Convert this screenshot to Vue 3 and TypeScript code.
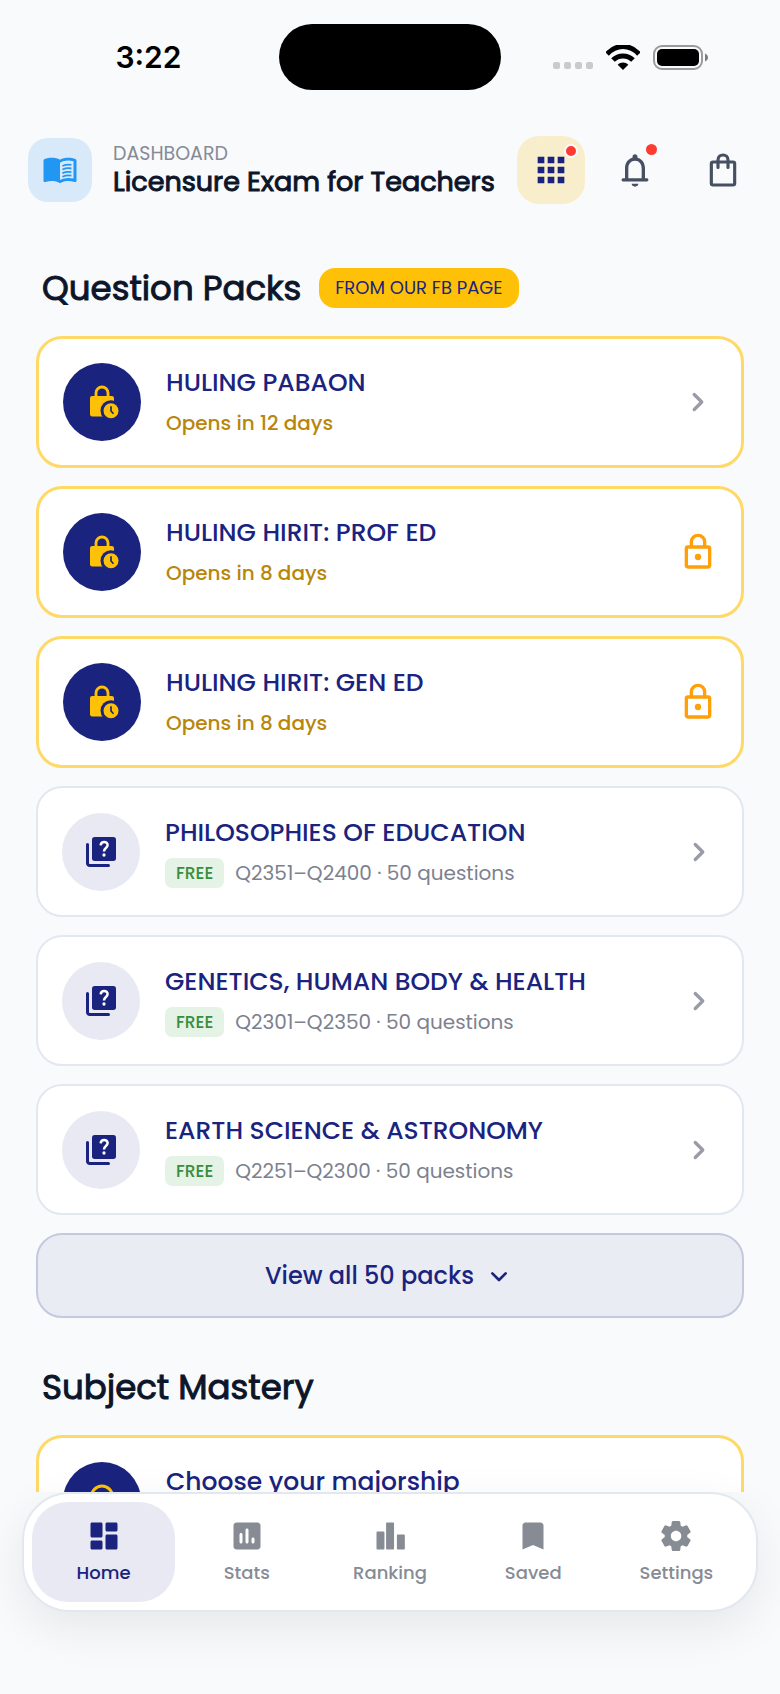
<script setup lang="ts">
interface Pack {
  title: string
  note: string
  kind: 'timed' | 'free'
  locked?: boolean
}

interface Tab {
  label: string
  icon: string
  active?: boolean
}

const packs: Pack[] = [
  { title: 'HULING PABAON', note: 'Opens in 12 days', kind: 'timed' },
  { title: 'HULING HIRIT: PROF ED', note: 'Opens in 8 days', kind: 'timed', locked: true },
  { title: 'HULING HIRIT: GEN ED', note: 'Opens in 8 days', kind: 'timed', locked: true },
  { title: 'PHILOSOPHIES OF EDUCATION', note: 'Q2351–Q2400 · 50 questions', kind: 'free' },
  { title: 'GENETICS, HUMAN BODY & HEALTH', note: 'Q2301–Q2350 · 50 questions', kind: 'free' },
  { title: 'EARTH SCIENCE & ASTRONOMY', note: 'Q2251–Q2300 · 50 questions', kind: 'free' },
]

const tabs: Tab[] = [
  {
    label: 'Home',
    active: true,
    icon: 'M4 13h6c.55 0 1-.45 1-1V4c0-.55-.45-1-1-1H4c-.55 0-1 .45-1 1v8c0 .55.45 1 1 1zm0 8h6c.55 0 1-.45 1-1v-4c0-.55-.45-1-1-1H4c-.55 0-1 .45-1 1v4c0 .55.45 1 1 1zm10 0h6c.55 0 1-.45 1-1v-8c0-.55-.45-1-1-1h-6c-.55 0-1 .45-1 1v8c0 .55.45 1 1 1zM13 4v4c0 .55.45 1 1 1h6c.55 0 1-.45 1-1V4c0-.55-.45-1-1-1h-6c-.55 0-1 .45-1 1z',
  },
  {
    label: 'Stats',
    icon: 'M19 3H5c-1.1 0-2 .9-2 2v14c0 1.1.9 2 2 2h14c1.1 0 2-.9 2-2V5c0-1.1-.9-2-2-2zM8 17c-.55 0-1-.45-1-1v-5c0-.55.45-1 1-1s1 .45 1 1v5c0 .55-.45 1-1 1zm4 0c-.55 0-1-.45-1-1V8c0-.55.45-1 1-1s1 .45 1 1v8c0 .55-.45 1-1 1zm4 0c-.55 0-1-.45-1-1v-2c0-.55.45-1 1-1s1 .45 1 1v2c0 .55-.45 1-1 1z',
  },
  {
    label: 'Ranking',
    icon: 'M3.700 9h3.900c.4 0 .7.3.7.7v10.600c0 .4-.3.7-.7.7H3.700c-.4 0-.7-.3-.7-.7V9.700c0-.4.3-.7.7-.7zM10.100 3h3.900c.4 0 .7.3.7.7v16.600c0 .4-.3.7-.7.7h-3.900c-.4 0-.7-.3-.7-.7V3.700c0-.4.3-.7.7-.7zM17.300 11h3.900c.4 0 .7.3.7.7v8.600c0 .4-.3.7-.7.7h-3.900c-.4 0-.7-.3-.7-.7v-8.600c0-.4.3-.7.7-.7z',
  },
  {
    label: 'Saved',
    icon: 'M17 3H7c-1.100 0-2 .9-2 2v16l7-3 7 3V5c0-1.100-.9-2-2-2z',
  },
  {
    label: 'Settings',
    icon: 'M19.500 12c0-.23-.01-.45-.03-.68l1.860-1.410c.4-.3.510-.860.260-1.300l-1.870-3.230c-.25-.44-.790-.620-1.250-.42l-2.150.91c-.37-.26-.76-.49-1.170-.68l-.29-2.310c-.06-.5-.49-.88-.99-.88h-3.730c-.51 0-.94.38-1 .88l-.29 2.310c-.41.190-.8.420-1.170.680l-2.150-.91c-.46-.2-1-.02-1.250.420L2.410 8.620c-.25.440-.14.990.260 1.300l1.860 1.410c-.02.220-.03.440-.03.670s.01.450.03.680l-1.860 1.410c-.4.300-.51.860-.26 1.300l1.870 3.230c.25.440.790.620 1.250.420l2.150-.91c.370.260.760.490 1.170.680l.29 2.310c.06.5.49.880.99.880h3.730c.5 0 .93-.38.990-.88l.29-2.310c.41-.19.800-.42 1.170-.68l2.150.91c.46.2 1 .02 1.250-.42l1.870-3.230c.25-.44.140-.99-.26-1.300l-1.860-1.410c.03-.23.040-.450.040-.68zm-7.460 3.500c-1.930 0-3.500-1.570-3.500-3.500s1.570-3.500 3.500-3.500 3.500 1.570 3.500 3.500-1.570 3.500-3.500 3.500z',
  },
]
</script>

<template>
  <div class="app">
    <div class="status">
      <div class="side"><time>3:22</time></div>
      <div class="island"></div>
      <div class="side indicators">
        <span class="dots"><i v-for="n in 4" :key="n"></i></span>
        <svg class="wifi" viewBox="0 0 34 25" aria-hidden="true">
          <path d="M1 9C10-1 24-1 33 9" fill="none" stroke="#000" stroke-width="5" />
          <path d="M7 15c5.500-5.500 14.500-5.500 20 0" fill="none" stroke="#000" stroke-width="5" />
          <path d="M11.700 19.800c3-3 7.600-3 10.600 0L17 25z" fill="#000" />
        </svg>
        <svg class="battery" viewBox="0 0 56 25" aria-hidden="true">
          <rect x="1" y="1" width="48" height="23" rx="8" fill="none" stroke="#9a9b9d" stroke-width="2" />
          <rect x="4" y="4" width="42" height="17" rx="5" />
          <path d="M52 8.500c4 1.500 4 6.500 0 8z" fill="#7c7d7f" />
        </svg>
      </div>
    </div>

    <header class="top">
      <div class="logo">
        <svg viewBox="0 0 24 24" class="i36" fill="#2196f3" aria-hidden="true">
          <path fill-rule="evenodd" d="M12 5.200C10.500 4.200 8.500 3.900 6.500 3.900c-1.700 0-3.300.2-4.800.8-.4.2-.7.6-.7 1v13.400c0 .7.600 1.100 1.300.9 1.300-.5 2.700-.7 4.200-.7 1.900 0 3.900.4 5.500 1.500 1.600-1.100 3.600-1.500 5.500-1.500 1.500 0 2.900.2 4.200.7.700.2 1.300-.2 1.300-.9V5.700c0-.4-.3-.8-.7-1-1.500-.6-3.100-.8-4.800-.8-2 0-4 .3-5.500 1.300zM21 17.700c-1.100-.3-2.300-.4-3.500-.4-1.700 0-4 .5-5.500 1.400V7.200c1.500-.9 3.800-1.500 5.500-1.500 1.200 0 2.400.1 3.500.5z" />
          <path d="M13.600 9.300c2-.9 4-1.100 6-.7M13.600 11.700c2-.9 4-1.100 6-.7M13.600 14.100c2-.9 4-1.100 6-.7M13.600 16.500c2-.9 4-1.100 6-.7" fill="none" stroke="#2196f3" stroke-width="1.200" />
        </svg>
      </div>
      <div class="heading">
        <p>DASHBOARD</p>
        <h1>Licensure Exam for Teachers</h1>
      </div>
      <div class="actions">
        <button type="button" class="action apps" aria-label="Apps">
          <svg viewBox="0 0 24 24" class="i40" fill="#1a237e"><path d="M4 8h4V4H4zm6 12h4v-4h-4zm-6 0h4v-4H4zm0-6h4v-4H4zm6 0h4v-4h-4zm6-10v4h4V4zm-6 4h4V4h-4zm6 6h4v-4h-4zm0 6h4v-4h-4z" /></svg>
          <span class="alert ringed"></span>
        </button>
        <button type="button" class="action" aria-label="Notifications">
          <svg viewBox="0 0 24 24" class="i40" fill="#475062"><path d="M12 22c1.100 0 2-.7 2-1.700h-4c0 1 .9 1.700 2 1.700zm7.200-5H18v-6c0-3.070-1.630-5.640-4.500-6.320V4c0-.83-.67-1.500-1.500-1.500s-1.500.670-1.500 1.500v.68C7.640 5.360 6 7.920 6 11v6H4.800c-1.100 0-1.100 1.900 0 1.900h14.400c1.100 0 1.100-1.900 0-1.900zM16 17H8v-6c0-2.480 1.510-4.500 4-4.500s4 2.020 4 4.500z" /></svg>
          <span class="alert"></span>
        </button>
        <button type="button" class="action shop" aria-label="Shop">
          <svg viewBox="0 0 24 24" class="i40" fill="none" stroke="#475062" stroke-width="1.900" stroke-linecap="round"><rect x="5" y="7.200" width="14" height="13.800" rx="1" /><path d="M9 10.500V6c0-4 6-4 6 0v4.500" /></svg>
        </button>
      </div>
    </header>

    <main>
      <section>
        <div class="title-row">
          <h2>Question Packs</h2>
          <span class="source">FROM OUR FB PAGE</span>
        </div>
        <div class="list">
          <button v-for="p in packs" :key="p.title" type="button" class="card" :class="p.kind">
            <span class="disc">
              <svg v-if="p.kind === 'timed'" viewBox="0 0 24 24" class="i36" aria-hidden="true">
                <path d="M8 9V6a4 4 0 0 1 8 0v3" fill="none" stroke="#ffc107" stroke-width="1.900" />
                <rect x="4" y="8" width="16" height="13.600" rx="1.500" fill="#ffc107" />
                <circle cx="18" cy="17.800" r="7" fill="#1a237e" />
                <circle cx="18" cy="17.800" r="5" fill="#ffc107" />
                <path d="M18 14.800v3.200l1.700 1.800" fill="none" stroke="#1a237e" stroke-width="1.100" />
              </svg>
              <svg v-else viewBox="0 0 24 24" class="i36" aria-hidden="true">
                <path d="M3 7v12.500c0 .8.700 1.500 1.500 1.500H17" fill="none" stroke="#1a237e" stroke-width="2" stroke-linecap="round" />
                <rect x="6" y="2" width="16" height="16" rx="1.800" fill="#1a237e" />
                <path d="M11.800 7.600c.1-3 4.600-3 4.600-.2 0 1.900-2.400 2-2.400 4.200" fill="none" stroke="#fff" stroke-width="1.700" />
                <circle cx="14" cy="14" r="1.100" fill="#fff" />
              </svg>
            </span>
            <span class="body">
              <span class="name">{{ p.title }}</span>
              <span class="meta"><span v-if="p.kind === 'free'" class="tag">FREE</span>{{ p.note }}</span>
            </span>
            <span class="end">
              <svg v-if="p.locked" viewBox="0 0 24 24" class="i40" aria-hidden="true">
                <path d="M8 9V6a4 4 0 0 1 8 0v3" fill="none" stroke="#ff9f0a" stroke-width="2" />
                <rect x="5" y="9" width="14" height="12" rx="1" fill="none" stroke="#ff9f0a" stroke-width="2" />
                <circle cx="12" cy="15" r="1.900" fill="#ff9f0a" />
              </svg>
              <svg v-else viewBox="0 0 24 24" class="i36" fill="none" stroke="#9a9ba8" stroke-width="2.200" stroke-linecap="round" stroke-linejoin="round" aria-hidden="true"><path d="M9.500 7l5 5-5 5" /></svg>
            </span>
          </button>
          <button type="button" class="more">
            View all 50 packs
            <svg viewBox="0 0 24 24" class="i32" fill="none" stroke="#1a237e" stroke-width="2" stroke-linecap="round" stroke-linejoin="round" aria-hidden="true"><path d="M7 10l5 5 5-5" /></svg>
          </button>
        </div>
      </section>

      <section>
        <div class="title-row"><h2>Subject Mastery</h2></div>
        <button type="button" class="card timed major">
          <span class="disc">
            <svg viewBox="0 0 24 24" class="i36" fill="none" stroke="#ffc107" stroke-width="2" aria-hidden="true"><circle cx="12" cy="9" r="7" /><path d="M8 15v7l4-2 4 2v-7" /></svg>
          </span>
          <span class="body">
            <span class="name">Choose your majorship</span>
          </span>
        </button>
      </section>
    </main>

    <nav>
      <a v-for="t in tabs" :key="t.label" href="#" :class="{ active: t.active }">
        <svg viewBox="0 0 24 24" class="i36" fill="currentColor" aria-hidden="true"><path :d="t.icon" /></svg>
        <span>{{ t.label }}</span>
      </a>
    </nav>
  </div>
</template>

<style>
body {
  background: #f9fafc;
}
</style>

<style scoped>
.app {
  display: flex;
  flex-direction: column;
  height: 100vh;
  overflow: hidden;
  background: #f9fafc;
  color: #0d1529;
  font-family: Poppins, Inter, sans-serif;
  font-weight: 500;
}
.app * {
  box-sizing: border-box;
}
h1, h2, p {
  margin: 0;
  font-weight: 400;
}
h1, h2 {
  -webkit-text-stroke: 1px currentColor;
}
button {
  margin: 0;
  padding: 0;
  border: 0;
  background: none;
  font: inherit;
  color: inherit;
  text-align: left;
}
svg {
  display: block;
  flex: none;
}
.i32 { width: 32px; height: 32px; }
.i36 { width: 36px; height: 36px; }
.i40 { width: 40px; height: 40px; }

.status {
  display: grid;
  grid-template-columns: 1fr 222px 1fr;
  align-items: center;
  padding-top: 24px;
}
.island {
  height: 66px;
  border-radius: 33px;
  background: #000;
}
.side {
  display: flex;
  justify-content: center;
  padding-left: 18px;
  color: #000;
  font: 600 30px/36px Inter, sans-serif;
}
.indicators {
  align-items: center;
  justify-content: flex-end;
  gap: 13px;
  padding-right: 71px;
}
.dots {
  display: flex;
  gap: 4px;
  padding-top: 16px;
}
.dots i {
  width: 7px;
  height: 7px;
  border-radius: 2px;
  background: #c9cacc;
}
.wifi { width: 34px; height: 25px; }
.battery { width: 56px; height: 25px; }

.top {
  display: flex;
  align-items: center;
  padding: 46px 19px 0 28px;
}
.logo {
  display: grid;
  place-items: center;
  width: 64px;
  height: 64px;
  border-radius: 20px;
  background: #d8eafa;
}
.heading {
  flex: 1;
  padding-left: 21px;
  white-space: nowrap;
}
.heading p {
  color: #868b96;
  font-size: 19px;
  line-height: 24px;
}
.heading h1 {
  font-size: 27px;
  line-height: 32px;
}
.actions {
  display: flex;
  align-items: center;
  gap: 16px;
}
.action {
  position: relative;
  display: grid;
  place-items: center;
  width: 68px;
  height: 68px;
  border-radius: 22px;
}
.apps {
  background: #f9eecb;
}
.shop {
  width: 76px;
}
.alert {
  position: absolute;
  top: 8px;
  right: 12px;
  width: 11px;
  height: 11px;
  border-radius: 50%;
  background: #ff3b30;
}
.ringed {
  right: 7px;
  width: 14px;
  height: 14px;
  border: 2px solid #f9fafc;
}

main {
  flex: 1;
  min-height: 0;
  overflow: hidden;
  padding: 60px 36px 0;
}
.title-row {
  display: flex;
  align-items: center;
  gap: 18px;
  padding: 0 6px;
  height: 48px;
}
h2 {
  font-size: 34px;
  line-height: 48px;
}
.source {
  padding: 0 16px;
  border-radius: 16px;
  background: #ffc107;
  color: #1a237e;
  font-size: 18px;
  font-weight: 400;
  line-height: 40px;
}
.list {
  display: flex;
  flex-direction: column;
  gap: 18px;
  margin: 24px 0 45px;
}
section + section .title-row {
  margin-bottom: 24px;
}
.card {
  display: flex;
  align-items: center;
  width: 100%;
  padding: 0 23px 0 24px;
  border-radius: 26px;
  background: #fff;
  color: #1a237e;
}
.timed {
  min-height: 132px;
  border: 3px solid #ffd966;
}
.free {
  min-height: 131px;
  border: 2px solid #e2e8f0;
}
.disc {
  display: grid;
  place-items: center;
  flex: none;
  width: 78px;
  height: 78px;
  border-radius: 50%;
  background: #1a237e;
}
.free .disc {
  background: #e8e9f2;
}
.body {
  display: flex;
  flex-direction: column;
  flex: 1;
  padding-left: 25px;
}
.major .body {
  padding-bottom: 38px;
}
.name {
  font-size: 25px;
  line-height: 38px;
}
.meta {
  display: flex;
  align-items: center;
  gap: 11px;
  margin-top: 4px;
  color: #b8860b;
  font-size: 20px;
  line-height: 34px;
}
.free .meta {
  color: #7c818e;
  font-weight: 400;
}
.tag {
  padding: 0 11px;
  border-radius: 7px;
  background: #e5f3e6;
  color: #388e3c;
  font-size: 17px;
  font-weight: 500;
  line-height: 30px;
}
.end {
  display: grid;
  place-items: center;
  width: 40px;
}
.more {
  display: flex;
  align-items: center;
  justify-content: center;
  gap: 9px;
  width: 100%;
  height: 85px;
  border: 2px solid #c5c9e0;
  border-radius: 26px;
  background: #eaecf4;
  color: #1a237e;
  font-size: 24px;
  line-height: 36px;
}

nav {
  position: relative;
  display: flex;
  margin: 0 22px 82px;
  padding: 8px;
  border: 2px solid #e2e8f0;
  border-radius: 48px;
  background: #fff;
  box-shadow: 0 16px 48px rgba(0, 0, 0, 0.08);
}
nav a {
  display: flex;
  flex: 1;
  flex-direction: column;
  align-items: center;
  gap: 6px;
  padding: 16px 0;
  border-radius: 36px;
  color: #868b94;
  font-size: 18px;
  line-height: 26px;
  text-decoration: none;
}
nav a.active {
  background: #e8e9f2;
  color: #1a237e;
}
</style>
